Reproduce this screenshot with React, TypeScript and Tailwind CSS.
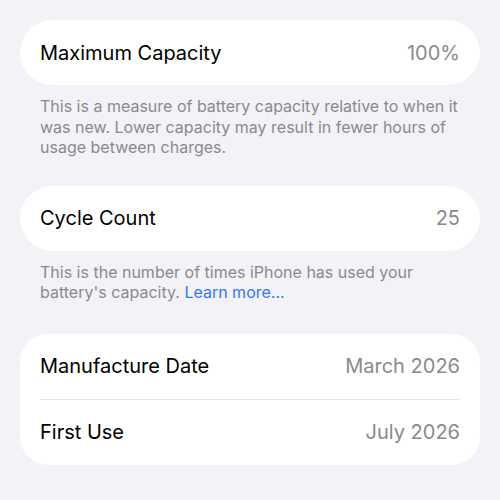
import React from 'react';

const Row = ({ label, value }: { label: string; value: string }) => (
  <div className="flex h-[65px] items-center justify-between">
    <span className="text-[20px] text-black">{label}</span>
    <span className="text-[20px] text-[#8a8a8e]">{value}</span>
  </div>
);

const App: React.FC = () => {
  return (
    <div
      className="h-[500px] w-[500px] bg-[#f2f2f7] px-5 pt-5"
      style={{ fontFamily: 'Inter, "Noto Sans", sans-serif' }}
    >
      <div className="rounded-[33px] bg-white px-5">
        <Row label="Maximum Capacity" value="100%" />
      </div>
      <p className="px-5 pt-[11px] text-[16px] leading-[20.5px] text-[#8a8a8e]">
        This is a measure of battery capacity relative to when it was new. Lower capacity may result in fewer hours of
        usage between charges.
      </p>

      <div className="mt-[28px] rounded-[33px] bg-white px-5">
        <Row label="Cycle Count" value="25" />
      </div>
      <p className="px-5 pt-[11px] text-[16px] leading-[20.5px] text-[#8a8a8e]">
        This is the number of times iPhone has used your battery's capacity.{' '}
        <span className="text-[#3478f6]">Learn more...</span>
      </p>

      <div className="mt-[31px] rounded-[28px] bg-white px-5">
        <Row label="Manufacture Date" value="March 2026" />
        <div className="h-px bg-[#e4e4e8]" />
        <Row label="First Use" value="July 2026" />
      </div>
    </div>
  );
};

export default App;
